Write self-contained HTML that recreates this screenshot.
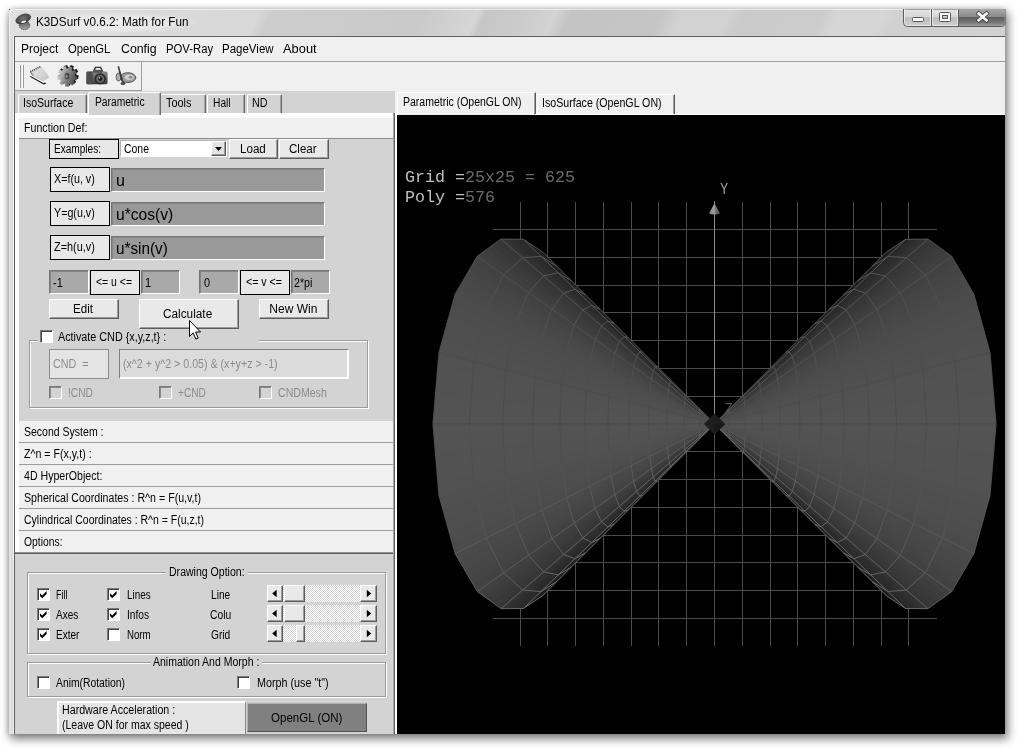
<!DOCTYPE html>
<html><head><meta charset="utf-8"><title>K3DSurf v0.6.2: Math for Fun</title>
<style>
html,body{margin:0;padding:0;}
body{width:1019px;height:748px;overflow:hidden;background:#fff;position:relative;font-family:"Liberation Sans",sans-serif;}
div,span,svg{position:absolute;box-sizing:border-box;}
.t{white-space:pre;line-height:1;display:block;transform-origin:0 0;}

.rb{border:1px solid;border-color:#fff #5c5c5c #5c5c5c #fff;background:#e9e9e9;box-shadow:inset -1px -1px 0 #9c9c9c;}
.sk{border:1px solid;border-color:#757575 #fff #fff #757575;box-shadow:inset 1px 1px 0 #868686;}
.lb{border:1px solid #000;background:#e8e8e8;}
.cb{border:1px solid;border-color:#7a7a7a #fff #fff #7a7a7a;background:#fff;box-shadow:inset 1px 1px 0 #404040;}
.cmb{border:1px solid;border-color:#b4b4b4 #fff #fff #b4b4b4;background:#fff;}
.gb{border:1px solid #9a9a9a;box-shadow:inset 1px 1px 0 #fff, 1px 1px 0 #fff;}

</style></head><body><div id="root" style="left:0;top:0;width:1019px;height:748px;filter:grayscale(1)">
<div style="left:9px;top:9px;width:996px;height:725px;background:#d4d4d4;border-radius:5px 0 0 0;box-shadow:2px 4px 10px 1px rgba(0,0,0,.5), -1px 0 5px rgba(0,0,0,.18);"></div>
<div style="left:9px;top:9px;width:996px;height:27px;border-radius:5px 0 0 0;background:linear-gradient(115deg,#e0e0e0 0.0%,#dadada 11.1%,#d8d8d8 25.0%,#cdcdcd 26.2%,#cacaca 41.3%,#d6d6d6 46.7%,#c6c6c6 47.5%,#cccccc 51.5%,#d3d3d3 54.5%,#c4c4c4 55.9%,#c5c5c5 64.9%,#d2d2d2 66.9%,#d2d2d2 71.6%,#cbcbcb 72.9%,#cccccc 80.9%,#d6d6d6 82.4%,#d6d6d6 86.9%,#d0d0d0 88.5%,#d2d2d2 100.0%);box-shadow:inset 0 1px 0 rgba(255,255,255,.55), inset 1px 0 0 rgba(255,255,255,.5);"></div>
<div style="left:9px;top:36px;width:5px;height:698px;background:linear-gradient(90deg,#e6e6e6,#d6d6d6);"></div>
<div style="left:9px;top:9px;width:1px;height:1px;background:#555;"></div>
<div style="left:30px;top:12px;width:168px;height:22px;background:radial-gradient(ellipse at center,rgba(255,255,255,.55) 0%,rgba(255,255,255,.35) 45%,rgba(255,255,255,0) 72%);"></div>
<svg style="left:14px;top:12px" width="20" height="20" viewBox="14 12 20 20"><defs><linearGradient id="ai" x1="0" y1="0" x2="0" y2="1"><stop offset="0" stop-color="#555"/><stop offset="1" stop-color="#a4a4a4"/></linearGradient><radialGradient id="ai2" cx=".5" cy=".45" r=".6"><stop offset="0" stop-color="#747474"/><stop offset="1" stop-color="#383838"/></radialGradient></defs><ellipse cx="24.5" cy="25.3" rx="5.3" ry="4.4" fill="url(#ai)" stroke="#3a3a3a" stroke-width=".8" stroke-dasharray="1.2 .8"/><ellipse cx="23.2" cy="18.9" rx="8.1" ry="4.7" transform="rotate(-22 23.2 18.9)" fill="url(#ai2)"/><ellipse cx="23.6" cy="21.8" rx="2.5" ry=".95" transform="rotate(-20 23.6 21.8)" fill="#fff"/></svg>
<span class="t" style="left:36.40px;top:16px;font-size:12px;transform:scaleX(0.9771);">K3DSurf v0.6.2: Math for Fun</span>
<svg style="left:900px;top:9px" width="106" height="20" viewBox="900 9 106 20"><defs><linearGradient id="cb1" x1="0" y1="0" x2="0" y2="1"><stop offset="0" stop-color="#e6e6e6"/><stop offset=".45" stop-color="#d6d6d6"/><stop offset=".5" stop-color="#bcbcbc"/><stop offset="1" stop-color="#d0d0d0"/></linearGradient><linearGradient id="cb2" x1="0" y1="0" x2="0" y2="1"><stop offset="0" stop-color="#a8a8a8"/><stop offset=".45" stop-color="#8a8a8a"/><stop offset=".5" stop-color="#5e5e5e"/><stop offset=".8" stop-color="#767676"/><stop offset="1" stop-color="#a0a0a0"/></linearGradient></defs><path d="M903.5 9V22.5Q903.5 26.5 907.5 26.5H1001Q1005 26.5 1005 24V9Z" fill="url(#cb1)" stroke="#5c5c5c" stroke-width="1"/><path d="M958.5 9V26H1001Q1004.5 26 1004.5 23.5V9Z" fill="url(#cb2)"/><path d="M904.5 9V22.5Q904.5 25.5 907.5 25.5H930.5V9M932.5 9V25.5H957.5V9" fill="none" stroke="#f4f4f4" stroke-opacity=".7" stroke-width="1"/><path d="M931.5 9V26M958.5 9V26" stroke="#5c5c5c" stroke-width="1"/><rect x="912.5" y="17.5" width="11" height="4" rx="1" fill="#fafafa" stroke="#555" stroke-width="1"/><rect x="939.5" y="12.5" width="11" height="9" rx="1" fill="#fafafa" stroke="#555" stroke-width="1"/><rect x="942.5" y="15.5" width="5" height="3" fill="#c8c8c8" stroke="#555" stroke-width="1"/><path d="M978.7 13.6L986.5 20.2M986.5 13.6L978.7 20.2" stroke="#444" stroke-width="4.4" stroke-linecap="square" fill="none"/><path d="M978.7 13.6L986.5 20.2M986.5 13.6L978.7 20.2" stroke="#fafafa" stroke-width="2.7" stroke-linecap="square" fill="none"/></svg>
<div style="left:13px;top:36px;width:1px;height:698px;background:#f2f2f2;"></div>
<div style="left:14px;top:36px;width:991px;height:698px;background:#5e5e5e;"></div>
<div style="left:15px;top:37px;width:990px;height:697px;background:#f0f0f0;"></div>
<div style="left:15px;top:61px;width:990px;height:1px;background:#a0a0a0;"></div>
<span class="t" style="left:21.00px;top:43px;font-size:12px;">Project</span>
<span class="t" style="left:68.20px;top:43px;font-size:12px;transform:scaleX(0.9325);">OpenGL</span>
<span class="t" style="left:121.30px;top:43px;font-size:12px;transform:scaleX(1.0263);">Config</span>
<span class="t" style="left:166.00px;top:43px;font-size:12px;transform:scaleX(0.9437);">POV-Ray</span>
<span class="t" style="left:222.00px;top:43px;font-size:12px;transform:scaleX(0.9587);">PageView</span>
<span class="t" style="left:283.30px;top:43px;font-size:12px;transform:scaleX(1.0714);">About</span>
<div style="left:15px;top:62px;width:127px;height:29px;border-right:1px solid #a0a0a0;border-bottom:1px solid #a0a0a0;"></div>
<div style="left:19px;top:65px;width:2px;height:23px;border-left:1px solid #fff;border-right:1px solid #999;"></div>
<div style="left:22px;top:65px;width:2px;height:23px;border-left:1px solid #fff;border-right:1px solid #999;"></div>
<svg style="left:24px;top:62px" width="118" height="28" viewBox="24 62 118 28"><defs><linearGradient id="tg1" x1="0" y1="0" x2="1" y2="1"><stop offset="0" stop-color="#b8b8b8"/><stop offset=".35" stop-color="#e6e6e6"/><stop offset=".7" stop-color="#d6d6d6"/><stop offset="1" stop-color="#c4c4c4"/></linearGradient><linearGradient id="tg2" x1="0" y1=".2" x2="1" y2=".6"><stop offset="0" stop-color="#e4e4e4"/><stop offset=".4" stop-color="#9a9a9a"/><stop offset="1" stop-color="#444"/></linearGradient><linearGradient id="tg3" x1="0" y1="0" x2="0" y2="1"><stop offset="0" stop-color="#8c8c8c"/><stop offset="1" stop-color="#3a3a3a"/></linearGradient></defs><path d="M29.4 76.6L43.6 84.5L46.4 83.4L45.2 82.4L43.4 83L31.2 76.2Z" fill="#1a1a1a"/><path d="M30.6 75.4L43.4 82.4L46 81.4L33.4 74.6Z" fill="#fafafa"/><path d="M30.2 71.6L40.6 66.3L48.6 77.2L43 80.9L33.4 76Z" fill="url(#tg1)" stroke="#a8a8a8" stroke-width=".5"/><path d="M32.2 73.6l9-4.6M33.8 75.2l9.6-4.9M36 76.6l9.6-4.9M38.4 78l9-4.6M40.8 79.4l7.4-3.8" stroke="#bdbdbd" stroke-width=".6"/><path d="M30.4 71.7L40.6 66.5" stroke="#4a4a4a" stroke-width="1.8" stroke-dasharray="1 1"/><path d="M30.4 72.2L33.4 76" stroke="#777" stroke-width="1.1"/><path d="M76.5 74.8L78.8 75.5L78.1 79.0L75.7 78.7L74.9 80.0L76.2 82.1L73.6 84.3L71.9 82.5L70.4 83.0L70.2 85.5L66.7 85.4L66.6 82.9L65.2 82.3L63.4 84.0L60.8 81.7L62.3 79.7L61.5 78.3L59.1 78.5L58.6 75.0L61.0 74.4L61.3 72.8L59.3 71.4L61.1 68.3L63.3 69.5L64.5 68.5L63.9 66.0L67.2 64.9L68.1 67.2L69.7 67.3L70.7 65.0L73.9 66.3L73.2 68.7L74.4 69.8L76.6 68.8L78.2 71.8L76.2 73.2Z" fill="#1c1c1c"/><path d="M75.0 76.0L77.3 76.7L76.6 80.2L74.2 79.9L73.4 81.2L74.7 83.3L72.1 85.5L70.4 83.7L68.9 84.2L68.7 86.7L65.2 86.6L65.1 84.1L63.7 83.5L61.9 85.2L59.3 82.9L60.8 80.9L60.0 79.5L57.6 79.7L57.1 76.2L59.5 75.6L59.8 74.0L57.8 72.6L59.6 69.5L61.8 70.7L63.0 69.7L62.4 67.2L65.7 66.1L66.6 68.4L68.2 68.5L69.2 66.2L72.4 67.5L71.7 69.9L72.9 71.0L75.1 70.0L76.7 73.0L74.7 74.4Z" fill="url(#tg2)"/><ellipse cx="67.0" cy="76.1" rx="2.3" ry="3.1" fill="#3a3a3a"/><ellipse cx="66.6" cy="76.3" rx="1.1" ry="1.8" fill="#9a9a9a"/><path d="M93.5 71.5L95.5 67.4H100.6L102.6 71.5Z" fill="none" stroke="#2e2e2e" stroke-width="1.4"/><rect x="86.4" y="71.4" width="21.2" height="12.8" rx="1.6" fill="url(#tg3)"/><rect x="86.4" y="71.4" width="6.4" height="12.8" rx="1.2" fill="#4e4e4e"/><rect x="93.6" y="69.8" width="8.4" height="3" fill="#555"/><circle cx="100.2" cy="78.8" r="5.6" fill="#2a2a2a"/><circle cx="100.2" cy="78.8" r="3.9" fill="#6a6a6a"/><circle cx="100.2" cy="78.8" r="2.2" fill="#1c1c1c"/><circle cx="99.4" cy="77.8" r=".9" fill="#bbb"/><ellipse cx="128" cy="77.6" rx="7.8" ry="4.9" fill="#9a9a9a" stroke="#5a5a5a" stroke-width="1"/><ellipse cx="129.2" cy="77.2" rx="4.4" ry="2.6" fill="#cfcfcf"/><ellipse cx="130.5" cy="77.2" rx="1.8" ry="1.3" fill="#8a8a8a"/><ellipse cx="118.6" cy="77" rx="2.5" ry="4" fill="#b0b0b0" stroke="#5a5a5a" stroke-width=".9"/><path d="M117.6 66.4L119 66L122.6 78.4L124 85.4L120.6 79.2Z" fill="#3c3c3c"/><ellipse cx="123" cy="83.4" rx="2.4" ry="1.6" fill="#4a4a4a"/></svg>
<div style="left:15px;top:91px;width:380px;height:22px;background:#d3d3d3;"></div>
<div style="left:15px;top:113px;width:380px;height:621px;background:#fff;"></div>
<div style="left:393px;top:113px;width:1px;height:621px;background:#a4a4a4;"></div>
<div style="left:394px;top:113px;width:1px;height:621px;background:#626262;"></div>
<div style="left:18px;top:94px;width:69px;height:19px;background:#d3d3d3;border-top:1px solid #fff;border-left:1px solid #fff;border-right:1px solid #6a6a6a;box-shadow:inset -1px 0 0 #a4a4a4;border-radius:2px 2px 0 0;"></div>
<span class="t" style="left:23.00px;top:97px;font-size:12px;transform:scaleX(0.8768);">IsoSurface</span>
<div style="left:207px;top:94px;width:38px;height:19px;background:#d3d3d3;border-top:1px solid #fff;border-left:1px solid #fff;border-right:1px solid #6a6a6a;box-shadow:inset -1px 0 0 #a4a4a4;border-radius:2px 2px 0 0;"></div>
<span class="t" style="left:213.20px;top:97px;font-size:12px;transform:scaleX(0.8514);">Hall</span>
<div style="left:247px;top:94px;width:35px;height:19px;background:#d3d3d3;border-top:1px solid #fff;border-left:1px solid #fff;border-right:1px solid #6a6a6a;box-shadow:inset -1px 0 0 #a4a4a4;border-radius:2px 2px 0 0;"></div>
<span class="t" style="left:252.20px;top:97px;font-size:12px;transform:scaleX(0.9000);">ND</span>
<div style="left:160px;top:94px;width:46px;height:19px;background:#d3d3d3;border-top:1px solid #fff;border-left:1px solid #fff;border-right:1px solid #6a6a6a;box-shadow:inset -1px 0 0 #a4a4a4;border-radius:2px 2px 0 0;"></div>
<span class="t" style="left:166.40px;top:97px;font-size:12px;transform:scaleX(0.9067);">Tools</span>
<div style="left:88px;top:92px;width:73px;height:23px;background:#d3d3d3;border-top:1px solid #fff;border-left:1px solid #fff;border-right:1px solid #6a6a6a;box-shadow:inset -1px 0 0 #a4a4a4;border-radius:2px 2px 0 0;"></div>
<span class="t" style="left:95.20px;top:96px;font-size:12px;transform:scaleX(0.8532);">Parametric</span>
<div style="left:19px;top:118px;width:374px;height:20px;background:#f0f0f0;"></div>
<span class="t" style="left:24.20px;top:122px;font-size:12px;transform:scaleX(0.8884);">Function Def:</span>
<div style="left:19px;top:138px;width:374px;height:283px;background:#d3d3d3;"></div>
<div style="left:19px;top:138px;width:374px;height:1px;background:#8c8c8c;"></div>
<div style="left:19px;top:421px;width:374px;height:21px;background:#f0f0f0;"></div>
<span class="t" style="left:24.20px;top:426px;font-size:12px;transform:scaleX(0.8764);">Second System :</span>
<div style="left:19px;top:442px;width:374px;height:1px;background:#9c9c9c;"></div>
<div style="left:19px;top:443px;width:374px;height:21px;background:#f0f0f0;"></div>
<span class="t" style="left:24.20px;top:448px;font-size:12px;transform:scaleX(0.8847);">Z^n = F(x,y,t) :</span>
<div style="left:19px;top:464px;width:374px;height:1px;background:#9c9c9c;"></div>
<div style="left:19px;top:465px;width:374px;height:21px;background:#f0f0f0;"></div>
<span class="t" style="left:24.20px;top:470px;font-size:12px;transform:scaleX(0.8839);">4D HyperObject:</span>
<div style="left:19px;top:486px;width:374px;height:1px;background:#9c9c9c;"></div>
<div style="left:19px;top:487px;width:374px;height:21px;background:#f0f0f0;"></div>
<span class="t" style="left:24.20px;top:492px;font-size:12px;transform:scaleX(0.8858);">Spherical Coordinates : R^n = F(u,v,t)</span>
<div style="left:19px;top:508px;width:374px;height:1px;background:#9c9c9c;"></div>
<div style="left:19px;top:509px;width:374px;height:21px;background:#f0f0f0;"></div>
<span class="t" style="left:24.20px;top:514px;font-size:12px;transform:scaleX(0.8736);">Cylindrical Coordinates : R^n = F(u,z,t)</span>
<div style="left:19px;top:530px;width:374px;height:1px;background:#9c9c9c;"></div>
<div style="left:19px;top:531px;width:374px;height:21px;background:#f0f0f0;"></div>
<span class="t" style="left:24.20px;top:536px;font-size:12px;transform:scaleX(0.8637);">Options:</span>
<div style="left:19px;top:552px;width:374px;height:1px;background:#9c9c9c;"></div>
<div style="left:15px;top:552px;width:378px;height:182px;background:#d3d3d3;"></div>
<div style="left:15px;top:552px;width:378px;height:1px;background:#909090;"></div>
<div style="left:15px;top:553px;width:378px;height:1px;background:#5e5e5e;"></div>
<div class="lb" style="left:49px;top:139px;width:70px;height:20px"></div>
<span class="t" style="left:53.80px;top:143px;font-size:12px;transform:scaleX(0.8389);">Examples:</span>
<div class="cmb" style="left:120px;top:140px;width:107px;height:17px"></div>
<span class="t" style="left:124.40px;top:143px;font-size:12px;transform:scaleX(0.8714);">Cone</span>
<div class="rb" style="left:211px;top:141px;width:15px;height:15px;background:#e4e4e4"></div>
<svg style="left:211px;top:141px" width="15" height="15"><path d="M4 6h7l-3.5 4z" fill="#000"/></svg>
<div class="rb" style="left:229px;top:139px;width:49px;height:20px"></div>
<span class="t" style="left:240.00px;top:143px;font-size:12px;transform:scaleX(0.9664);">Load</span>
<div class="rb" style="left:279px;top:139px;width:50px;height:20px"></div>
<span class="t" style="left:289.30px;top:143px;font-size:12px;transform:scaleX(0.9624);">Clear</span>
<div class="lb" style="left:50px;top:167px;width:60px;height:25px"></div>
<span class="t" style="left:53.60px;top:173px;font-size:12px;transform:scaleX(0.8932);">X=f(u, v)</span>
<div class="sk" style="left:111px;top:168px;width:214px;height:24px;background:#999"></div>
<span class="t" style="left:115.90px;top:173px;font-size:16px;">u</span>
<div class="lb" style="left:50px;top:201px;width:60px;height:25px"></div>
<span class="t" style="left:53.60px;top:207px;font-size:12px;transform:scaleX(0.8930);">Y=g(u,v)</span>
<div class="sk" style="left:111px;top:202px;width:214px;height:24px;background:#999"></div>
<span class="t" style="left:115.90px;top:207px;font-size:16px;transform:scaleX(0.9748);">u*cos(v)</span>
<div class="lb" style="left:50px;top:235px;width:60px;height:25px"></div>
<span class="t" style="left:53.60px;top:241px;font-size:12px;transform:scaleX(0.9064);">Z=h(u,v)</span>
<div class="sk" style="left:111px;top:236px;width:214px;height:24px;background:#999"></div>
<span class="t" style="left:115.90px;top:241px;font-size:16px;transform:scaleX(0.9551);">u*sin(v)</span>
<div class="sk" style="left:49px;top:270px;width:40px;height:24px;background:#a9a9a9"></div>
<span class="t" style="left:52.80px;top:277px;font-size:12px;transform:scaleX(0.9150);">-1</span>
<div class="sk" style="left:141px;top:270px;width:39px;height:24px;background:#a9a9a9"></div>
<span class="t" style="left:144.60px;top:277px;font-size:12px;transform:scaleX(0.9150);">1</span>
<div class="sk" style="left:199px;top:270px;width:40px;height:24px;background:#a9a9a9"></div>
<span class="t" style="left:203.60px;top:277px;font-size:12px;transform:scaleX(0.9150);">0</span>
<div class="sk" style="left:291px;top:270px;width:39px;height:24px;background:#a9a9a9"></div>
<span class="t" style="left:294.00px;top:277px;font-size:12px;transform:scaleX(0.8847);">2*pi</span>
<div class="lb" style="left:90px;top:270px;width:50px;height:25px"></div>
<span class="t" style="left:96.30px;top:276px;font-size:12px;transform:scaleX(0.8701);">&lt;= u &lt;=</span>
<div class="lb" style="left:240px;top:270px;width:50px;height:25px"></div>
<span class="t" style="left:246.30px;top:276px;font-size:12px;transform:scaleX(0.8845);">&lt;= v &lt;=</span>
<div class="rb" style="left:49px;top:299px;width:70px;height:20px"></div>
<span class="t" style="left:73.30px;top:303px;font-size:12px;transform:scaleX(0.9672);">Edit</span>
<div class="rb" style="left:139px;top:299px;width:100px;height:30px"></div>
<span class="t" style="left:163.40px;top:308px;font-size:12px;transform:scaleX(0.9834);">Calculate</span>
<div class="rb" style="left:259px;top:299px;width:70px;height:20px"></div>
<span class="t" style="left:269.30px;top:303px;font-size:12px;">New Win</span>
<div class="gb" style="left:29px;top:340px;width:339px;height:68px"></div>
<div style="left:38px;top:336px;width:221px;height:10px;background:#d3d3d3;"></div>
<div class="cb" style="left:40px;top:330px;width:13px;height:13px"></div>
<span class="t" style="left:58.40px;top:331px;font-size:12px;transform:scaleX(0.8981);">Activate CND {x,y,z,t} :</span>
<div style="left:49px;top:349px;width:60px;height:30px;border:1px solid #8c8c8c;background:#e4e4e4"></div>
<span class="t" style="left:53.20px;top:358px;font-size:12px;color:#8c8c8c;transform:scaleX(0.8973);">CND  =</span>
<div class="sk" style="left:119px;top:349px;width:230px;height:30px;background:#dbdbdb;border-color:#808080 #fff #fff #808080;box-shadow:inset 0 -1px 0 #fff,inset -1px 0 0 #fff"></div>
<span class="t" style="left:123.00px;top:358px;font-size:12px;color:#8c8c8c;transform:scaleX(0.8868);">(x^2 + y^2 &gt; 0.05) &amp; (x+y+z &gt; -1)</span>
<div class="cb" style="left:49px;top:386px;width:13px;height:13px;background:#d3d3d3;box-shadow:inset 1px 1px 0 #8a8a8a"></div>
<span class="t" style="left:68.20px;top:387px;font-size:12px;color:#8c8c8c;transform:scaleX(0.8523);">!CND</span>
<div class="cb" style="left:159px;top:386px;width:13px;height:13px;background:#d3d3d3;box-shadow:inset 1px 1px 0 #8a8a8a"></div>
<span class="t" style="left:178.20px;top:387px;font-size:12px;color:#8c8c8c;transform:scaleX(0.8423);">+CND</span>
<div class="cb" style="left:259px;top:386px;width:13px;height:13px;background:#d3d3d3;box-shadow:inset 1px 1px 0 #8a8a8a"></div>
<span class="t" style="left:278.20px;top:387px;font-size:12px;color:#8c8c8c;transform:scaleX(0.8818);">CNDMesh</span>
<svg style="left:188px;top:319px" width="16" height="24" viewBox="0 0 16 24"><path d="M1.5 1.5v16l3.7-3.6 2.6 6.2 2.4-1-2.6-6.1h5z" fill="#fff" stroke="#000" stroke-width="1" stroke-linejoin="miter"/></svg>
<div class="gb" style="left:27px;top:572px;width:359px;height:82px"></div>
<div style="left:166px;top:566px;width:82px;height:12px;background:#d3d3d3;"></div>
<span class="t" style="left:169.40px;top:566px;font-size:12px;transform:scaleX(0.8787);">Drawing Option:</span>
<div class="cb" style="left:37px;top:588px;width:13px;height:13px"></div>
<svg style="left:37px;top:588px" width="13" height="13"><path d="M3 5.2l2.2 2.3 4.4-4.4v2.8l-4.4 4.4L3 8z" fill="#000"/></svg>
<div class="cb" style="left:107px;top:588px;width:13px;height:13px"></div>
<svg style="left:107px;top:588px" width="13" height="13"><path d="M3 5.2l2.2 2.3 4.4-4.4v2.8l-4.4 4.4L3 8z" fill="#000"/></svg>
<span class="t" style="left:56.30px;top:589px;font-size:12px;transform:scaleX(0.7437);">Fill</span>
<span class="t" style="left:126.60px;top:589px;font-size:12px;transform:scaleX(0.8226);">Lines</span>
<span class="t" style="left:211.00px;top:589px;font-size:12px;transform:scaleX(0.8462);">Line</span>
<div class="cb" style="left:37px;top:608px;width:13px;height:13px"></div>
<svg style="left:37px;top:608px" width="13" height="13"><path d="M3 5.2l2.2 2.3 4.4-4.4v2.8l-4.4 4.4L3 8z" fill="#000"/></svg>
<div class="cb" style="left:107px;top:608px;width:13px;height:13px"></div>
<svg style="left:107px;top:608px" width="13" height="13"><path d="M3 5.2l2.2 2.3 4.4-4.4v2.8l-4.4 4.4L3 8z" fill="#000"/></svg>
<span class="t" style="left:56.30px;top:609px;font-size:12px;transform:scaleX(0.8321);">Axes</span>
<span class="t" style="left:126.60px;top:609px;font-size:12px;transform:scaleX(0.8456);">Infos</span>
<span class="t" style="left:210.00px;top:609px;font-size:12px;transform:scaleX(0.8590);">Colu</span>
<div class="cb" style="left:37px;top:628px;width:13px;height:13px"></div>
<svg style="left:37px;top:628px" width="13" height="13"><path d="M3 5.2l2.2 2.3 4.4-4.4v2.8l-4.4 4.4L3 8z" fill="#000"/></svg>
<div class="cb" style="left:107px;top:628px;width:13px;height:13px"></div>
<span class="t" style="left:56.30px;top:629px;font-size:12px;transform:scaleX(0.8355);">Exter</span>
<span class="t" style="left:126.60px;top:629px;font-size:12px;transform:scaleX(0.8045);">Norm</span>
<span class="t" style="left:211.00px;top:629px;font-size:12px;transform:scaleX(0.8469);">Grid</span>
<div style="left:267px;top:585px;width:110px;height:17px;background:repeating-conic-gradient(#fff 0% 25%, #d3d3d3 0% 50%) 0 0/2px 2px;"></div>
<div class="rb" style="left:267px;top:585px;width:16px;height:17px"></div>
<svg style="left:267px;top:585px" width="16" height="16"><path d="M9.6 4.8v7.4l-4.4-3.7z" fill="#000"/></svg>
<div class="rb" style="left:360px;top:585px;width:17px;height:17px"></div>
<svg style="left:360px;top:585px" width="17" height="16"><path d="M6.8 4.8v7.4l4.4-3.7z" fill="#000"/></svg>
<div class="rb" style="left:284px;top:585px;width:21px;height:17px"></div>
<div style="left:267px;top:605px;width:110px;height:17px;background:repeating-conic-gradient(#fff 0% 25%, #d3d3d3 0% 50%) 0 0/2px 2px;"></div>
<div class="rb" style="left:267px;top:605px;width:16px;height:17px"></div>
<svg style="left:267px;top:605px" width="16" height="16"><path d="M9.6 4.8v7.4l-4.4-3.7z" fill="#000"/></svg>
<div class="rb" style="left:360px;top:605px;width:17px;height:17px"></div>
<svg style="left:360px;top:605px" width="17" height="16"><path d="M6.8 4.8v7.4l4.4-3.7z" fill="#000"/></svg>
<div class="rb" style="left:284px;top:605px;width:21px;height:17px"></div>
<div style="left:267px;top:625px;width:110px;height:17px;background:repeating-conic-gradient(#fff 0% 25%, #d3d3d3 0% 50%) 0 0/2px 2px;"></div>
<div class="rb" style="left:267px;top:625px;width:16px;height:17px"></div>
<svg style="left:267px;top:625px" width="16" height="16"><path d="M9.6 4.8v7.4l-4.4-3.7z" fill="#000"/></svg>
<div class="rb" style="left:360px;top:625px;width:17px;height:17px"></div>
<svg style="left:360px;top:625px" width="17" height="16"><path d="M6.8 4.8v7.4l4.4-3.7z" fill="#000"/></svg>
<div class="rb" style="left:296px;top:625px;width:9px;height:17px"></div>
<div class="gb" style="left:27px;top:662px;width:359px;height:35px"></div>
<div style="left:151px;top:656px;width:111px;height:12px;background:#d3d3d3;"></div>
<span class="t" style="left:153.30px;top:656px;font-size:12px;transform:scaleX(0.8764);">Animation And Morph :</span>
<div class="cb" style="left:37px;top:676px;width:13px;height:13px"></div>
<div class="cb" style="left:237px;top:676px;width:13px;height:13px"></div>
<span class="t" style="left:56.30px;top:677px;font-size:12px;transform:scaleX(0.8622);">Anim(Rotation)</span>
<span class="t" style="left:256.60px;top:677px;font-size:12px;transform:scaleX(0.8964);">Morph (use "t")</span>
<div style="left:57px;top:701px;width:189px;height:33px;background:#e4e4e4;border-top:2px solid #fff;border-left:2px solid #fff;border-right:1px solid #888"></div>
<span class="t" style="left:62.40px;top:704px;font-size:12px;transform:scaleX(0.8885);">Hardware Acceleration :</span>
<span class="t" style="left:62.40px;top:719px;font-size:12px;transform:scaleX(0.8761);">(Leave ON for max speed )</span>
<div style="left:247px;top:703px;width:120px;height:29px;background:#808080;border:1px solid;border-color:#b0b0b0 #505050 #505050 #b0b0b0"></div>
<span class="t" style="left:270.50px;top:712px;font-size:12px;transform:scaleX(0.9617);">OpenGL (ON)</span>
<div style="left:397px;top:92px;width:139px;height:24px;background:#f0f0f0;border-top:1px solid #fff;border-left:1px solid #fff;border-right:1px solid #5a5a5a;box-shadow:inset -1px 0 0 #a0a0a0;"></div>
<span class="t" style="left:403.40px;top:96px;font-size:12px;transform:scaleX(0.8747);">Parametric (OpenGL ON)</span>
<div style="left:537px;top:94px;width:138px;height:20px;background:#f0f0f0;border-top:1px solid #fff;border-left:1px solid #fff;border-right:1px solid #5a5a5a;box-shadow:inset -1px 0 0 #a0a0a0;"></div>
<span class="t" style="left:542.30px;top:97px;font-size:12px;transform:scaleX(0.8863);">IsoSurface (OpenGL ON)</span>
<div style="left:535px;top:114px;width:470px;height:1px;background:#fff;"></div>
<div style="left:395px;top:113px;width:2px;height:621px;background:#fff;"></div>
<svg style="left:397px;top:115px" width="608" height="619" viewBox="397 115 608 619">
<rect x="397" y="115" width="608" height="619" fill="#000"/>
<path d="M714.5 202V646M742.5 202V646M686.5 202V646M770.5 202V646M658.5 202V646M797.5 202V646M631.5 202V646M825.5 202V646M603.5 202V646M853.5 202V646M575.5 202V646M881.5 202V646M547.5 202V646M908.5 202V646M520.5 202V646M493 451.5H937M493 396.5H937M493 479.5H937M493 368.5H937M493 507.5H937M493 340.5H937M493 535.5H937M493 312.5H937M493 562.5H937M493 285.5H937M493 590.5H937M493 257.5H937M493 618.5H937M493 229.5H937" stroke="#4c4c4c" stroke-width="1" fill="none"/>
<path d="M714.5 201V414" stroke="#8e8e8e" stroke-width="1"/>
<defs><linearGradient id="ag" x1="0" x2="1"><stop offset="0" stop-color="#8c8c8c"/><stop offset=".5" stop-color="#9a9a9a"/><stop offset=".55" stop-color="#767676"/><stop offset="1" stop-color="#5c5c5c"/></linearGradient></defs>
<path d="M714.5 203L719.9 213.6Q714.5 215.6 709.1 213.6Z" fill="url(#ag)"/>
<g shape-rendering="crispEdges"><path d="M714.5 423.9L542.7 252.1L539.1 249.7Z" fill="#1b1b1b"/><path d="M714.5 423.9L539.1 249.7L535.5 247.3Z" fill="#1d1d1d"/><path d="M714.5 423.9L535.5 247.3L531.6 244.8Z" fill="#202020"/><path d="M714.5 423.9L531.6 244.8L527.6 242.1Z" fill="#222222"/><path d="M714.5 423.9L527.6 242.1L523.4 239.3Z" fill="#252525"/><path d="M714.5 423.9L523.4 239.3L519.3 239.3Z" fill="#282828"/><path d="M714.5 423.9L519.3 239.3L515.1 239.2Z" fill="#2b2b2b"/><path d="M714.5 423.9L515.1 239.2L510.6 239.2Z" fill="#2d2d2d"/><path d="M714.5 423.9L510.6 239.2L506.0 239.1Z" fill="#303030"/><path d="M714.5 423.9L506.0 239.1L501.1 239.1Z" fill="#333333"/><path d="M714.5 423.9L501.1 239.1L496.7 242.2Z" fill="#363636"/><path d="M714.5 423.9L496.7 242.2L492.2 245.5Z" fill="#383838"/><path d="M714.5 423.9L492.2 245.5L487.4 248.9Z" fill="#3b3b3b"/><path d="M714.5 423.9L487.4 248.9L482.5 252.5Z" fill="#3d3d3d"/><path d="M714.5 423.9L482.5 252.5L477.3 256.2Z" fill="#404040"/><path d="M714.5 423.9L477.3 256.2L473.2 263.2Z" fill="#424242"/><path d="M714.5 423.9L473.2 263.2L468.9 270.6Z" fill="#444444"/><path d="M714.5 423.9L468.9 270.6L464.5 278.2Z" fill="#464646"/><path d="M714.5 423.9L464.5 278.2L459.9 286.0Z" fill="#484848"/><path d="M714.5 423.9L459.9 286.0L455.1 294.2Z" fill="#4a4a4a"/><path d="M714.5 423.9L455.1 294.2L452.0 305.3Z" fill="#4b4b4b"/><path d="M714.5 423.9L452.0 305.3L448.9 316.7Z" fill="#4d4d4d"/><path d="M714.5 423.9L448.9 316.7L445.6 328.4Z" fill="#4e4e4e"/><path d="M714.5 423.9L445.6 328.4L442.3 340.3Z" fill="#4f4f4f"/><path d="M714.5 423.9L442.3 340.3L438.9 352.6Z" fill="#505050"/><path d="M714.5 423.9L438.9 352.6L437.7 366.6Z" fill="#515151"/><path d="M714.5 423.9L437.7 366.6L436.5 380.7Z" fill="#525252"/><path d="M714.5 423.9L436.5 380.7L435.3 395.0Z" fill="#525252"/><path d="M714.5 423.9L435.3 395.0L434.1 409.4Z" fill="#535353"/><path d="M714.5 423.9L434.1 409.4L432.9 423.9Z" fill="#535353"/><path d="M714.5 423.9L432.9 423.9L434.1 438.4Z" fill="#535353"/><path d="M714.5 423.9L434.1 438.4L435.3 452.8Z" fill="#535353"/><path d="M714.5 423.9L435.3 452.8L436.5 467.1Z" fill="#525252"/><path d="M714.5 423.9L436.5 467.1L437.7 481.2Z" fill="#525252"/><path d="M714.5 423.9L437.7 481.2L438.9 495.2Z" fill="#515151"/><path d="M714.5 423.9L438.9 495.2L442.3 507.5Z" fill="#505050"/><path d="M714.5 423.9L442.3 507.5L445.6 519.4Z" fill="#4f4f4f"/><path d="M714.5 423.9L445.6 519.4L448.9 531.1Z" fill="#4e4e4e"/><path d="M714.5 423.9L448.9 531.1L452.0 542.5Z" fill="#4d4d4d"/><path d="M714.5 423.9L452.0 542.5L455.1 553.6Z" fill="#4b4b4b"/><path d="M714.5 423.9L455.1 553.6L459.9 561.8Z" fill="#4a4a4a"/><path d="M714.5 423.9L459.9 561.8L464.5 569.6Z" fill="#484848"/><path d="M714.5 423.9L464.5 569.6L468.9 577.2Z" fill="#464646"/><path d="M714.5 423.9L468.9 577.2L473.2 584.6Z" fill="#444444"/><path d="M714.5 423.9L473.2 584.6L477.3 591.6Z" fill="#424242"/><path d="M714.5 423.9L477.3 591.6L482.5 595.3Z" fill="#404040"/><path d="M714.5 423.9L482.5 595.3L487.4 598.9Z" fill="#3d3d3d"/><path d="M714.5 423.9L487.4 598.9L492.2 602.3Z" fill="#3b3b3b"/><path d="M714.5 423.9L492.2 602.3L496.7 605.6Z" fill="#383838"/><path d="M714.5 423.9L496.7 605.6L501.1 608.7Z" fill="#363636"/><path d="M714.5 423.9L501.1 608.7L506.0 608.7Z" fill="#333333"/><path d="M714.5 423.9L506.0 608.7L510.6 608.6Z" fill="#303030"/><path d="M714.5 423.9L510.6 608.6L515.1 608.6Z" fill="#2d2d2d"/><path d="M714.5 423.9L515.1 608.6L519.3 608.5Z" fill="#2b2b2b"/><path d="M714.5 423.9L519.3 608.5L523.4 608.5Z" fill="#282828"/><path d="M714.5 423.9L523.4 608.5L527.6 605.7Z" fill="#252525"/><path d="M714.5 423.9L527.6 605.7L531.6 603.0Z" fill="#222222"/><path d="M714.5 423.9L531.6 603.0L535.5 600.5Z" fill="#202020"/><path d="M714.5 423.9L535.5 600.5L539.1 598.1Z" fill="#1d1d1d"/><path d="M714.5 423.9L539.1 598.1L542.7 595.7Z" fill="#1b1b1b"/></g>
<g shape-rendering="crispEdges"><path d="M714.5 423.9L886.3 252.1L889.9 249.7Z" fill="#1b1b1b"/><path d="M714.5 423.9L889.9 249.7L893.5 247.3Z" fill="#1d1d1d"/><path d="M714.5 423.9L893.5 247.3L897.4 244.8Z" fill="#202020"/><path d="M714.5 423.9L897.4 244.8L901.4 242.1Z" fill="#222222"/><path d="M714.5 423.9L901.4 242.1L905.6 239.3Z" fill="#252525"/><path d="M714.5 423.9L905.6 239.3L909.7 239.3Z" fill="#282828"/><path d="M714.5 423.9L909.7 239.3L913.9 239.2Z" fill="#2b2b2b"/><path d="M714.5 423.9L913.9 239.2L918.4 239.2Z" fill="#2d2d2d"/><path d="M714.5 423.9L918.4 239.2L923.0 239.1Z" fill="#303030"/><path d="M714.5 423.9L923.0 239.1L927.9 239.1Z" fill="#333333"/><path d="M714.5 423.9L927.9 239.1L932.3 242.2Z" fill="#363636"/><path d="M714.5 423.9L932.3 242.2L936.8 245.5Z" fill="#383838"/><path d="M714.5 423.9L936.8 245.5L941.6 248.9Z" fill="#3b3b3b"/><path d="M714.5 423.9L941.6 248.9L946.5 252.5Z" fill="#3d3d3d"/><path d="M714.5 423.9L946.5 252.5L951.7 256.2Z" fill="#404040"/><path d="M714.5 423.9L951.7 256.2L955.8 263.2Z" fill="#424242"/><path d="M714.5 423.9L955.8 263.2L960.1 270.6Z" fill="#444444"/><path d="M714.5 423.9L960.1 270.6L964.5 278.2Z" fill="#464646"/><path d="M714.5 423.9L964.5 278.2L969.1 286.0Z" fill="#484848"/><path d="M714.5 423.9L969.1 286.0L973.9 294.2Z" fill="#4a4a4a"/><path d="M714.5 423.9L973.9 294.2L977.0 305.3Z" fill="#4b4b4b"/><path d="M714.5 423.9L977.0 305.3L980.1 316.7Z" fill="#4d4d4d"/><path d="M714.5 423.9L980.1 316.7L983.4 328.4Z" fill="#4e4e4e"/><path d="M714.5 423.9L983.4 328.4L986.7 340.3Z" fill="#4f4f4f"/><path d="M714.5 423.9L986.7 340.3L990.1 352.6Z" fill="#505050"/><path d="M714.5 423.9L990.1 352.6L991.3 366.6Z" fill="#515151"/><path d="M714.5 423.9L991.3 366.6L992.5 380.7Z" fill="#525252"/><path d="M714.5 423.9L992.5 380.7L993.7 395.0Z" fill="#525252"/><path d="M714.5 423.9L993.7 395.0L994.9 409.4Z" fill="#535353"/><path d="M714.5 423.9L994.9 409.4L996.1 423.9Z" fill="#535353"/><path d="M714.5 423.9L996.1 423.9L994.9 438.4Z" fill="#535353"/><path d="M714.5 423.9L994.9 438.4L993.7 452.8Z" fill="#535353"/><path d="M714.5 423.9L993.7 452.8L992.5 467.1Z" fill="#525252"/><path d="M714.5 423.9L992.5 467.1L991.3 481.2Z" fill="#525252"/><path d="M714.5 423.9L991.3 481.2L990.1 495.2Z" fill="#515151"/><path d="M714.5 423.9L990.1 495.2L986.7 507.5Z" fill="#505050"/><path d="M714.5 423.9L986.7 507.5L983.4 519.4Z" fill="#4f4f4f"/><path d="M714.5 423.9L983.4 519.4L980.1 531.1Z" fill="#4e4e4e"/><path d="M714.5 423.9L980.1 531.1L977.0 542.5Z" fill="#4d4d4d"/><path d="M714.5 423.9L977.0 542.5L973.9 553.6Z" fill="#4b4b4b"/><path d="M714.5 423.9L973.9 553.6L969.1 561.8Z" fill="#4a4a4a"/><path d="M714.5 423.9L969.1 561.8L964.5 569.6Z" fill="#484848"/><path d="M714.5 423.9L964.5 569.6L960.1 577.2Z" fill="#464646"/><path d="M714.5 423.9L960.1 577.2L955.8 584.6Z" fill="#444444"/><path d="M714.5 423.9L955.8 584.6L951.7 591.6Z" fill="#424242"/><path d="M714.5 423.9L951.7 591.6L946.5 595.3Z" fill="#404040"/><path d="M714.5 423.9L946.5 595.3L941.6 598.9Z" fill="#3d3d3d"/><path d="M714.5 423.9L941.6 598.9L936.8 602.3Z" fill="#3b3b3b"/><path d="M714.5 423.9L936.8 602.3L932.3 605.6Z" fill="#383838"/><path d="M714.5 423.9L932.3 605.6L927.9 608.7Z" fill="#363636"/><path d="M714.5 423.9L927.9 608.7L923.0 608.7Z" fill="#333333"/><path d="M714.5 423.9L923.0 608.7L918.4 608.6Z" fill="#303030"/><path d="M714.5 423.9L918.4 608.6L913.9 608.6Z" fill="#2d2d2d"/><path d="M714.5 423.9L913.9 608.6L909.7 608.5Z" fill="#2b2b2b"/><path d="M714.5 423.9L909.7 608.5L905.6 608.5Z" fill="#282828"/><path d="M714.5 423.9L905.6 608.5L901.4 605.7Z" fill="#252525"/><path d="M714.5 423.9L901.4 605.7L897.4 603.0Z" fill="#222222"/><path d="M714.5 423.9L897.4 603.0L893.5 600.5Z" fill="#202020"/><path d="M714.5 423.9L893.5 600.5L889.9 598.1Z" fill="#1d1d1d"/><path d="M714.5 423.9L889.9 598.1L886.3 595.7Z" fill="#1b1b1b"/></g>
<path d="M700.2 409.6L700.1 410.0M685.9 395.3L685.4 395.8M671.5 380.9L670.4 381.3M657.2 366.6L655.2 366.7M642.9 352.3L639.8 351.7M628.6 338.0L624.0 336.5M614.3 323.7L608.0 321.0M600.0 309.4L591.7 305.3M585.6 295.0L575.1 289.2M571.3 280.7L558.2 272.9M557.0 266.4L541.0 256.3M542.7 252.1L523.4 239.3M728.8 409.6L728.9 410.0M743.1 395.3L743.6 395.8M757.5 380.9L758.6 381.3M771.8 366.6L773.8 366.7M786.1 352.3L789.2 351.7M800.4 338.0L805.0 336.5M814.7 323.7L821.0 321.0M829.0 309.4L837.3 305.3M843.4 295.0L853.9 289.2M857.7 280.7L870.8 272.9M872.0 266.4L888.0 256.3M886.3 252.1L905.6 239.3" stroke="#575757" stroke-width="1" fill="none"/>
<path d="M700.1 410.0L699.9 411.3M685.4 395.8L684.9 398.3M670.4 381.3L669.3 384.8M655.2 366.7L653.2 370.9M639.8 351.7L636.6 356.4M624.0 336.5L619.3 341.5M608.0 321.0L601.4 326.0M591.7 305.3L582.8 309.9M575.1 289.2L563.6 293.2M558.2 272.9L543.6 275.9M541.0 256.3L522.7 257.8M523.4 239.3L501.1 239.1M728.9 410.0L729.1 411.3M743.6 395.8L744.1 398.3M758.6 381.3L759.7 384.8M773.8 366.7L775.8 370.9M789.2 351.7L792.4 356.4M805.0 336.5L809.7 341.5M821.0 321.0L827.6 326.0M837.3 305.3L846.2 309.9M853.9 289.2L865.4 293.2M870.8 272.9L885.4 275.9M888.0 256.3L906.3 257.8M905.6 239.3L927.9 239.1" stroke="#555555" stroke-width="1" fill="none"/>
<path d="M699.9 411.3L699.8 413.5M684.9 398.3L684.5 402.7M669.3 384.8L668.4 391.3M653.2 370.9L651.4 379.3M636.6 356.4L633.6 366.7M619.3 341.5L614.9 353.4M601.4 326.0L595.1 339.5M582.8 309.9L574.2 324.7M563.6 293.2L552.1 309.0M543.6 275.9L528.6 292.5M522.7 257.8L503.7 274.9M501.1 239.1L477.3 256.2M729.1 411.3L729.2 413.5M744.1 398.3L744.5 402.7M759.7 384.8L760.6 391.3M775.8 370.9L777.6 379.3M792.4 356.4L795.4 366.7M809.7 341.5L814.1 353.4M827.6 326.0L833.9 339.5M846.2 309.9L854.8 324.7M865.4 293.2L876.9 309.0M885.4 275.9L900.4 292.5M906.3 257.8L925.3 274.9M927.9 239.1L951.7 256.2" stroke="#525252" stroke-width="1" fill="none"/>
<path d="M699.8 413.5L699.8 416.5M684.5 402.7L684.2 408.7M668.4 391.3L667.6 400.4M651.4 379.3L650.0 391.6M633.6 366.7L631.2 382.2M614.9 353.4L611.1 372.2M595.1 339.5L589.7 361.5M574.2 324.7L566.7 350.0M552.1 309.0L541.9 337.6M528.6 292.5L515.3 324.3M503.7 274.9L486.4 309.9M477.3 256.2L455.1 294.2M729.2 413.5L729.2 416.5M744.5 402.7L744.8 408.7M760.6 391.3L761.4 400.4M777.6 379.3L779.0 391.6M795.4 366.7L797.8 382.2M814.1 353.4L817.9 372.2M833.9 339.5L839.3 361.5M854.8 324.7L862.3 350.0M876.9 309.0L887.1 337.6M900.4 292.5L913.7 324.3M925.3 274.9L942.6 309.9M951.7 256.2L973.9 294.2" stroke="#505050" stroke-width="1" fill="none"/>
<path d="M699.8 416.5L699.7 420.1M684.2 408.7L683.9 416.0M667.6 400.4L667.1 411.6M650.0 391.6L649.0 406.9M631.2 382.2L629.6 401.9M611.1 372.2L608.7 396.5M589.7 361.5L586.1 390.7M566.7 350.0L561.6 384.3M541.9 337.6L534.9 377.4M515.3 324.3L505.8 369.9M486.4 309.9L474.0 361.6M455.1 294.2L438.9 352.6M729.2 416.5L729.3 420.1M744.8 408.7L745.1 416.0M761.4 400.4L761.9 411.6M779.0 391.6L780.0 406.9M797.8 382.2L799.4 401.9M817.9 372.2L820.3 396.5M839.3 361.5L842.9 390.7M862.3 350.0L867.4 384.3M887.1 337.6L894.1 377.4M913.7 324.3L923.2 369.9M942.6 309.9L955.0 361.6M973.9 294.2L990.1 352.6" stroke="#4d4d4d" stroke-width="1" fill="none"/>
<path d="M699.7 420.1L699.7 423.9M683.9 416.0L683.9 423.9M667.1 411.6L666.9 423.9M649.0 406.9L648.7 423.9M629.6 401.9L629.0 423.9M608.7 396.5L607.8 423.9M586.1 390.7L584.8 423.9M561.6 384.3L559.7 423.9M534.9 377.4L532.4 423.9M505.8 369.9L502.4 423.9M474.0 361.6L469.4 423.9M438.9 352.6L432.9 423.9M729.3 420.1L729.3 423.9M745.1 416.0L745.1 423.9M761.9 411.6L762.1 423.9M780.0 406.9L780.3 423.9M799.4 401.9L800.0 423.9M820.3 396.5L821.2 423.9M842.9 390.7L844.2 423.9M867.4 384.3L869.3 423.9M894.1 377.4L896.6 423.9M923.2 369.9L926.6 423.9M955.0 361.6L959.6 423.9M990.1 352.6L996.1 423.9" stroke="#4b4b4b" stroke-width="1" fill="none"/>
<path d="M699.7 423.9L699.7 427.7M683.9 423.9L683.9 431.8M666.9 423.9L667.1 436.2M648.7 423.9L649.0 440.9M629.0 423.9L629.6 445.9M607.8 423.9L608.7 451.3M584.8 423.9L586.1 457.1M559.7 423.9L561.6 463.5M532.4 423.9L534.9 470.4M502.4 423.9L505.8 477.9M469.4 423.9L474.0 486.2M432.9 423.9L438.9 495.2M729.3 423.9L729.3 427.7M745.1 423.9L745.1 431.8M762.1 423.9L761.9 436.2M780.3 423.9L780.0 440.9M800.0 423.9L799.4 445.9M821.2 423.9L820.3 451.3M844.2 423.9L842.9 457.1M869.3 423.9L867.4 463.5M896.6 423.9L894.1 470.4M926.6 423.9L923.2 477.9M959.6 423.9L955.0 486.2M996.1 423.9L990.1 495.2" stroke="#4e4e4e" stroke-width="1" fill="none"/>
<path d="M699.7 427.7L699.8 431.3M683.9 431.8L684.2 439.1M667.1 436.2L667.6 447.4M649.0 440.9L650.0 456.2M629.6 445.9L631.2 465.6M608.7 451.3L611.1 475.6M586.1 457.1L589.7 486.3M561.6 463.5L566.7 497.8M534.9 470.4L541.9 510.2M505.8 477.9L515.3 523.5M474.0 486.2L486.4 537.9M438.9 495.2L455.1 553.6M729.3 427.7L729.2 431.3M745.1 431.8L744.8 439.1M761.9 436.2L761.4 447.4M780.0 440.9L779.0 456.2M799.4 445.9L797.8 465.6M820.3 451.3L817.9 475.6M842.9 457.1L839.3 486.3M867.4 463.5L862.3 497.8M894.1 470.4L887.1 510.2M923.2 477.9L913.7 523.5M955.0 486.2L942.6 537.9M990.1 495.2L973.9 553.6" stroke="#545454" stroke-width="1" fill="none"/>
<path d="M699.8 431.3L699.8 434.3M684.2 439.1L684.5 445.1M667.6 447.4L668.4 456.5M650.0 456.2L651.4 468.5M631.2 465.6L633.6 481.1M611.1 475.6L614.9 494.4M589.7 486.3L595.1 508.3M566.7 497.8L574.2 523.1M541.9 510.2L552.1 538.8M515.3 523.5L528.6 555.3M486.4 537.9L503.7 572.9M455.1 553.6L477.3 591.6M729.2 431.3L729.2 434.3M744.8 439.1L744.5 445.1M761.4 447.4L760.6 456.5M779.0 456.2L777.6 468.5M797.8 465.6L795.4 481.1M817.9 475.6L814.1 494.4M839.3 486.3L833.9 508.3M862.3 497.8L854.8 523.1M887.1 510.2L876.9 538.8M913.7 523.5L900.4 555.3M942.6 537.9L925.3 572.9M973.9 553.6L951.7 591.6" stroke="#5a5a5a" stroke-width="1" fill="none"/>
<path d="M699.8 434.3L699.9 436.5M684.5 445.1L684.9 449.5M668.4 456.5L669.3 463.0M651.4 468.5L653.2 476.9M633.6 481.1L636.6 491.4M614.9 494.4L619.3 506.3M595.1 508.3L601.4 521.8M574.2 523.1L582.8 537.9M552.1 538.8L563.6 554.6M528.6 555.3L543.6 571.9M503.7 572.9L522.7 590.0M477.3 591.6L501.1 608.7M729.2 434.3L729.1 436.5M744.5 445.1L744.1 449.5M760.6 456.5L759.7 463.0M777.6 468.5L775.8 476.9M795.4 481.1L792.4 491.4M814.1 494.4L809.7 506.3M833.9 508.3L827.6 521.8M854.8 523.1L846.2 537.9M876.9 538.8L865.4 554.6M900.4 555.3L885.4 571.9M925.3 572.9L906.3 590.0M951.7 591.6L927.9 608.7" stroke="#5f5f5f" stroke-width="1" fill="none"/>
<path d="M699.9 436.5L700.1 437.8M684.9 449.5L685.4 452.0M669.3 463.0L670.4 466.5M653.2 476.9L655.2 481.1M636.6 491.4L639.8 496.1M619.3 506.3L624.0 511.3M601.4 521.8L608.0 526.8M582.8 537.9L591.7 542.5M563.6 554.6L575.1 558.6M543.6 571.9L558.2 574.9M522.7 590.0L541.0 591.5M501.1 608.7L523.4 608.5M729.1 436.5L728.9 437.8M744.1 449.5L743.6 452.0M759.7 463.0L758.6 466.5M775.8 476.9L773.8 481.1M792.4 491.4L789.2 496.1M809.7 506.3L805.0 511.3M827.6 521.8L821.0 526.8M846.2 537.9L837.3 542.5M865.4 554.6L853.9 558.6M885.4 571.9L870.8 574.9M906.3 590.0L888.0 591.5M927.9 608.7L905.6 608.5" stroke="#666666" stroke-width="1" fill="none"/>
<path d="M700.1 437.8L700.2 438.2M685.4 452.0L685.9 452.5M670.4 466.5L671.5 466.9M655.2 481.1L657.2 481.2M639.8 496.1L642.9 495.5M624.0 511.3L628.6 509.8M608.0 526.8L614.3 524.1M591.7 542.5L600.0 538.4M575.1 558.6L585.6 552.8M558.2 574.9L571.3 567.1M541.0 591.5L557.0 581.4M523.4 608.5L542.7 595.7M728.9 437.8L728.8 438.2M743.6 452.0L743.1 452.5M758.6 466.5L757.5 466.9M773.8 481.1L771.8 481.2M789.2 496.1L786.1 495.5M805.0 511.3L800.4 509.8M821.0 526.8L814.7 524.1M837.3 542.5L829.0 538.4M853.9 558.6L843.4 552.8M870.8 574.9L857.7 567.1M888.0 591.5L872.0 581.4M905.6 608.5L886.3 595.7" stroke="#6c6c6c" stroke-width="1" fill="none"/>
<path d="M714.5 423.9L542.7 252.1M714.5 423.9L886.3 252.1" stroke="#585858" stroke-width="1" fill="none"/>
<path d="M714.5 423.9L523.4 239.3M714.5 423.9L905.6 239.3" stroke="#565656" stroke-width="1" fill="none"/>
<path d="M714.5 423.9L501.1 239.1M714.5 423.9L927.9 239.1" stroke="#545454" stroke-width="1" fill="none"/>
<path d="M714.5 423.9L477.3 256.2M714.5 423.9L951.7 256.2" stroke="#515151" stroke-width="1" fill="none"/>
<path d="M714.5 423.9L455.1 294.2M714.5 423.9L973.9 294.2" stroke="#4e4e4e" stroke-width="1" fill="none"/>
<path d="M714.5 423.9L438.9 352.6M714.5 423.9L990.1 352.6" stroke="#4c4c4c" stroke-width="1" fill="none"/>
<path d="M714.5 423.9L432.9 423.9M714.5 423.9L996.1 423.9" stroke="#4a4a4a" stroke-width="1" fill="none"/>
<path d="M714.5 423.9L438.9 495.2M714.5 423.9L990.1 495.2" stroke="#525252" stroke-width="1" fill="none"/>
<path d="M714.5 423.9L455.1 553.6M714.5 423.9L973.9 553.6" stroke="#575757" stroke-width="1" fill="none"/>
<path d="M714.5 423.9L477.3 591.6M714.5 423.9L951.7 591.6" stroke="#5c5c5c" stroke-width="1" fill="none"/>
<path d="M714.5 423.9L501.1 608.7M714.5 423.9L927.9 608.7" stroke="#626262" stroke-width="1" fill="none"/>
<path d="M714.5 423.9L523.4 608.5M714.5 423.9L905.6 608.5" stroke="#696969" stroke-width="1" fill="none"/>
<path d="M714.5 423.9L542.7 595.7M714.5 423.9L886.3 595.7" stroke="#707070" stroke-width="1" fill="none"/>
<path d="M714.5 413.4L725.1 423.9L714.5 434.4L703.9 423.9Z" fill="#1d1d1d"/>
<path d="M714.5 423.9L725.1 423.9L714.5 434.4Z" fill="#181818"/>
<text x="720.2" y="193.8" font-family="Liberation Mono,monospace" font-size="16" fill="#a2a2a2" textLength="7.8" lengthAdjust="spacingAndGlyphs">Y</text>
<text x="725" y="412.5" font-family="Liberation Mono,monospace" font-size="15.5" fill="#525252" textLength="7.8" lengthAdjust="spacingAndGlyphs">Z</text>
</svg>
<span class="t" style="left:405.40px;top:170px;font-size:16.2px;color:#c0c0c0;font-family:'Liberation Mono',monospace;transform:scaleX(1.0287);">Grid =</span>
<span class="t" style="left:465.40px;top:170px;font-size:16.2px;color:#6c6c6c;font-family:'Liberation Mono',monospace;transform:scaleX(1.0287);">25x25 = 625</span>
<span class="t" style="left:405.40px;top:190px;font-size:16.2px;color:#c0c0c0;font-family:'Liberation Mono',monospace;transform:scaleX(1.0287);">Poly =</span>
<span class="t" style="left:465.40px;top:190px;font-size:16.2px;color:#6c6c6c;font-family:'Liberation Mono',monospace;transform:scaleX(1.0287);">576</span>
</div></body></html>
